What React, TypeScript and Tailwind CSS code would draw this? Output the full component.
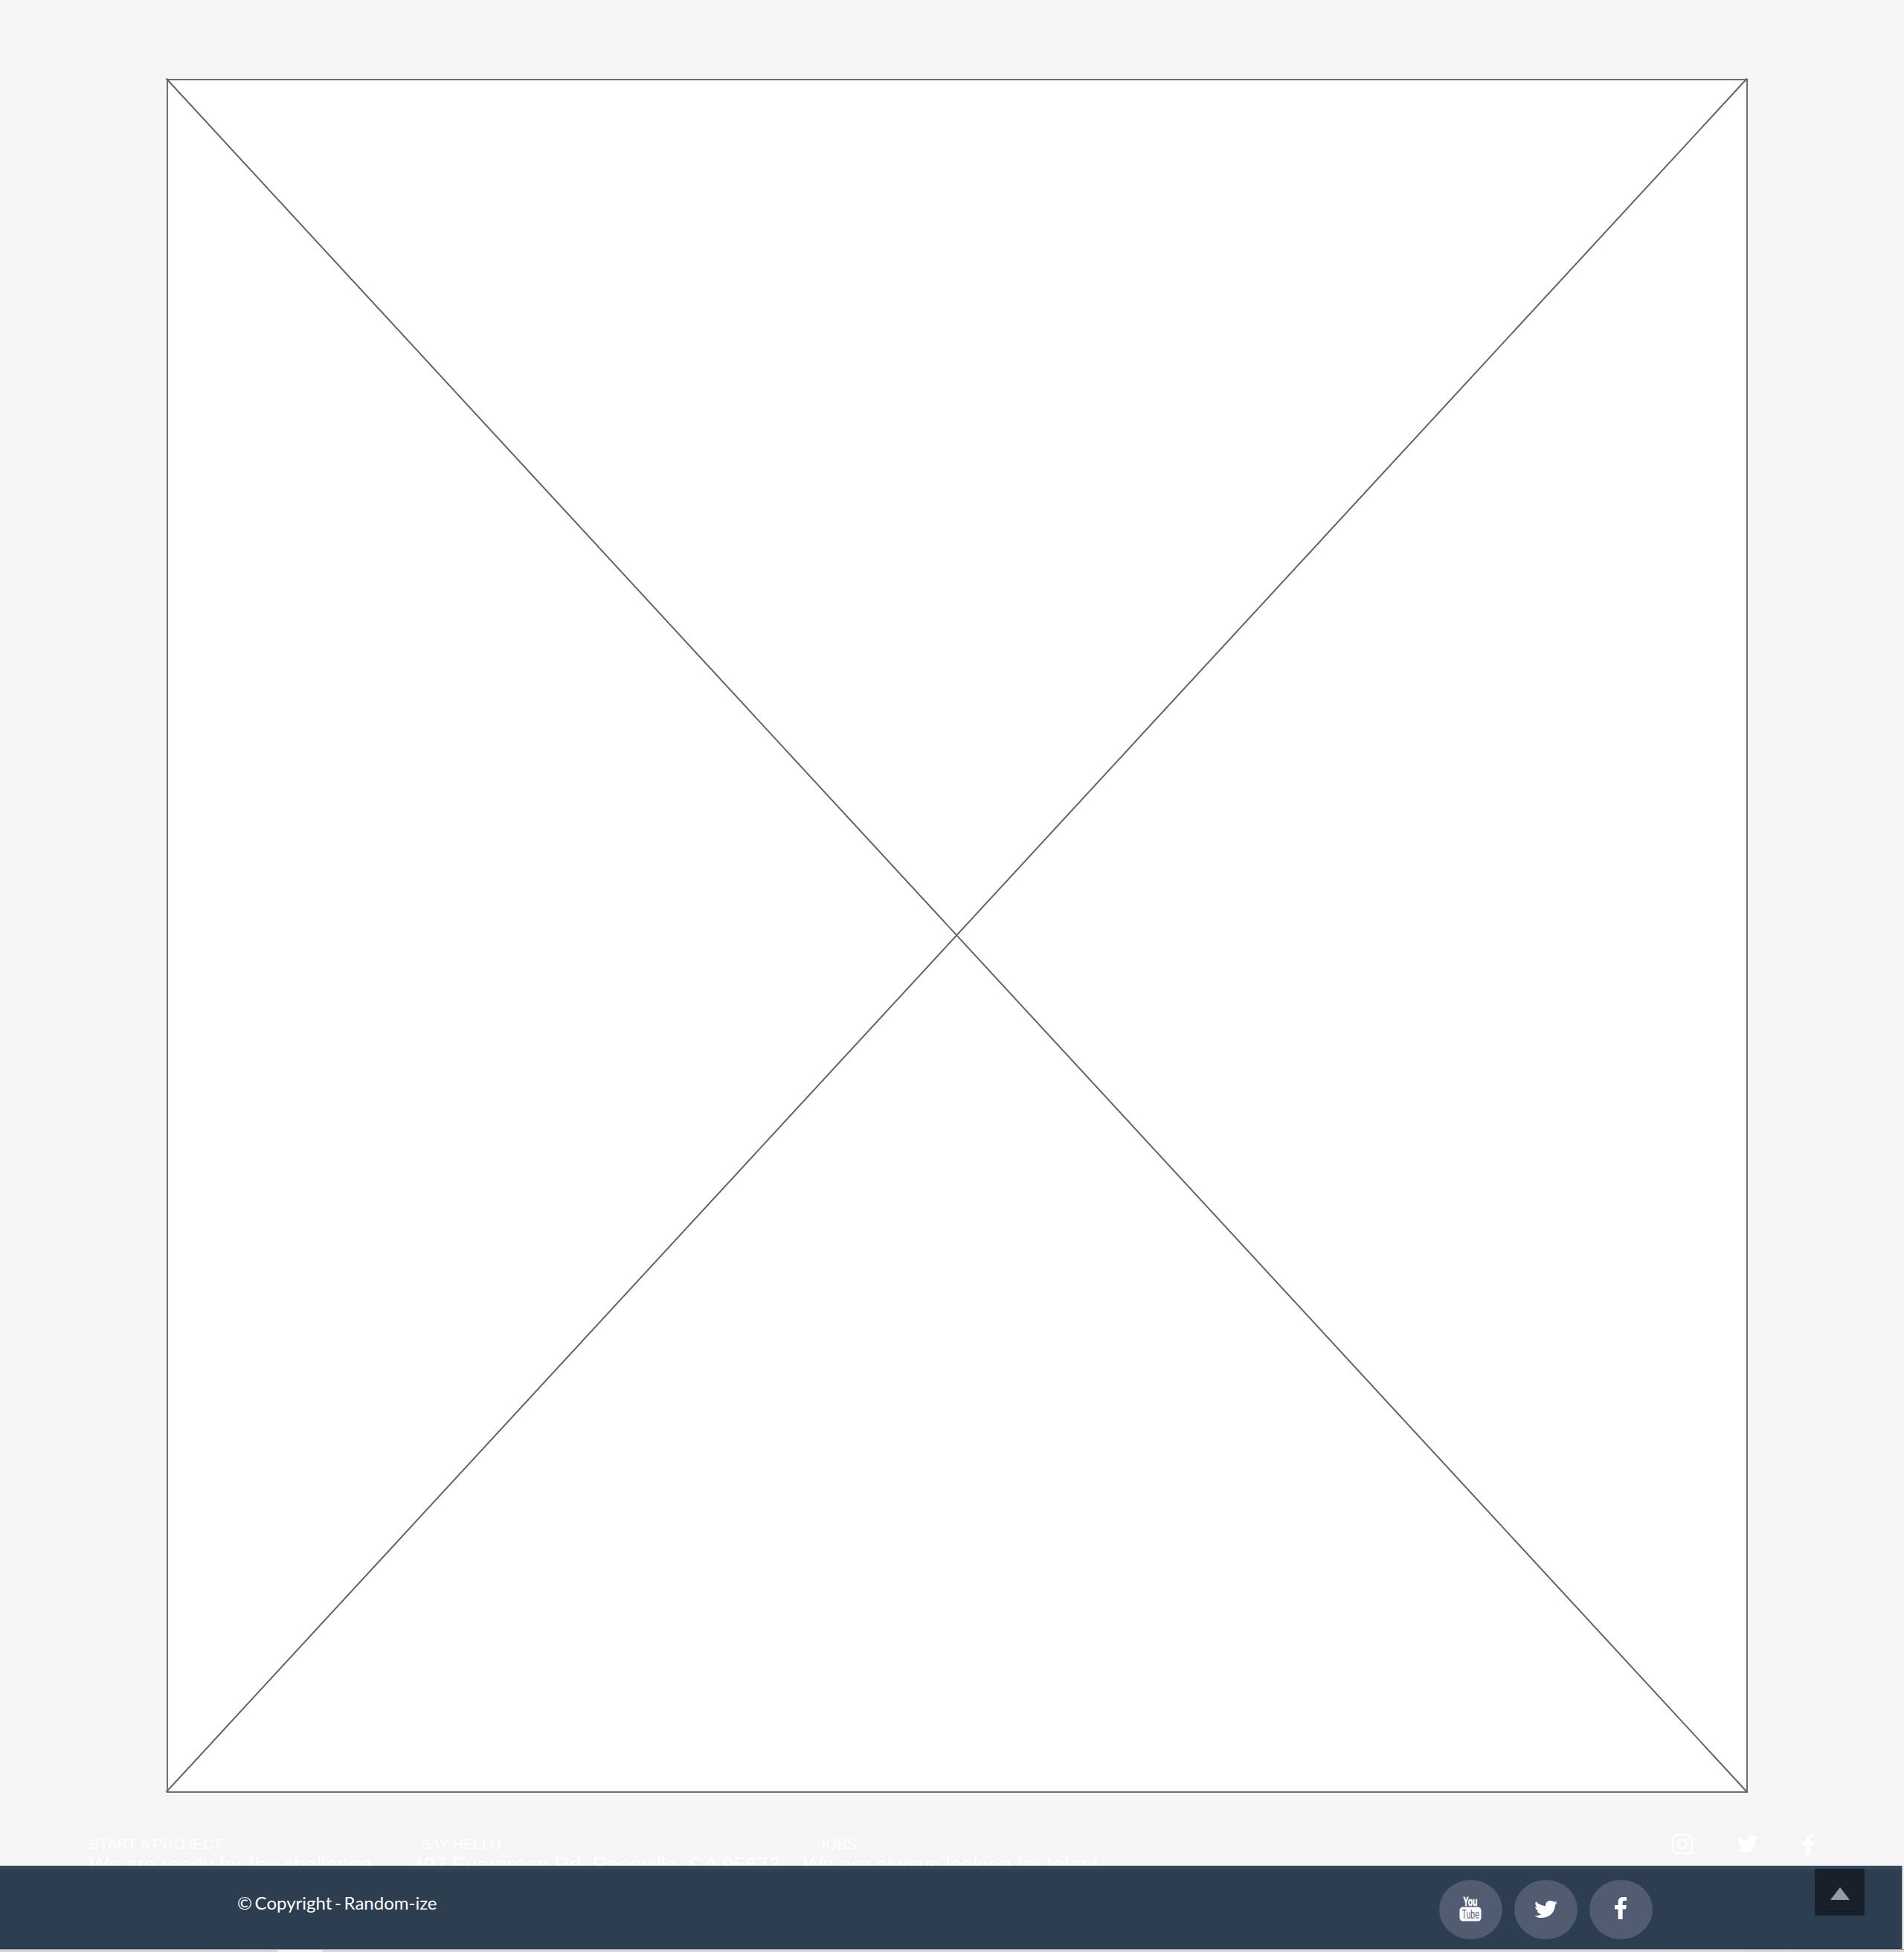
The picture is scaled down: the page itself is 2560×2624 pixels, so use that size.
import { FaTwitter, FaInstagram } from "react-icons/fa";

function Tweet() {
  return <FaTwitter className="h-full w-full" preserveAspectRatio="none" viewBox="0 48 512 416" />;
}

function Facebook() {
  return (
    <svg viewBox="0 0 15 28" preserveAspectRatio="none" className="h-full w-full" fill="currentColor">
      <path d="M15 .2V4.700h-2.600c-2 0-2.400 1-2.400 2.400v3.200h4.800l-.6 5H10V28H4.300V15.300H0v-5h4.300V6.600C4.300 2.400 6.900 0 10.800 0c1.800 0 3.500.1 4.200.2z" />
    </svg>
  );
}

function FooterColumn({ title, text, className, titleClass, textClass }: { title: string; text: string; className: string; titleClass: string; textClass: string }) {
  return (
    <div className={`flex shrink-0 flex-col whitespace-nowrap text-white ${className}`}>
      <span className={`text-[20px] leading-6 ${titleClass}`}>{title}</span>
      <span className={`text-[28px] leading-8 ${textClass}`}>{text}</span>
    </div>
  );
}

export default function App() {
  return (
    <div className="flex h-[2624px] w-[2560px] flex-col overflow-hidden bg-[#f6f4f5] font-['Liberation_Sans',sans-serif]">
      <main className="h-[2410px] shrink-0 pt-[106px] pl-[224px]">
        <div className="h-[2304px] w-[2126px] border-2 border-[#6e6e6e] bg-white">
          <svg className="-mt-[2px] -ml-[2px] h-[2304px] w-[2126px] overflow-visible" viewBox="0 0 2126 2304">
            <path d="M-.5-.5 2125 2303M2125-.5-.5 2303" stroke="#646464" strokeWidth="2" fill="none" />
          </svg>
        </div>
      </main>

      <section className="flex h-[98px] shrink-0 overflow-hidden pt-[57px] pl-[120px]">
        <FooterColumn title="START A PROJECT" text="We are ready for the challenge" className="w-[434px]" titleClass="" textClass="tracking-[-0.08px]" />
        <FooterColumn title="SAY HELLO" text="497 Evergreen Rd. Roseville, CA 95673" className="w-[526px]" titleClass="pl-[11px]" textClass="" />
        <FooterColumn title="JOBS" text="We are always looking for talent" className="w-[1168px]" titleClass="pl-[20px]" textClass="" />
        <div className="flex text-white">
          <FaInstagram className="-mt-[4px] -ml-[2px] h-[32px] w-[32px]" />
          <div className="ml-[58px] h-[23px] w-[28px]"><Tweet /></div>
          <div className="-mt-[2px] ml-[60px] h-[28px] w-[15px]"><Facebook /></div>
        </div>
      </section>

      <div className="flex shrink-0">
        <footer className="flex h-[112px] w-[2557px] shrink-0 border-t-[5px] border-[#34495e] bg-[#2c3e50] text-white">
          <div className="w-[1935px] shrink-0 pt-[29px] pl-[319px] font-['Lato',sans-serif] text-[24px] leading-8 [word-spacing:-2.500px]">© Copyright - Random-ize</div>
          <div className="flex shrink-0 gap-4 pt-[14px]">
            <div className="h-[80px] w-[85px] rounded-[50%] bg-[#515b72] pt-[22px] pl-[27px]">
              <svg viewBox="0 0 30 34" className="h-[34px] w-[30px]">
                <text x="5.500" y="13" textLength="19" lengthAdjust="spacingAndGlyphs" fill="#fff" stroke="#fff" strokeWidth=".6" fontFamily="Liberation Sans" fontWeight="700" fontSize="16">You</text>
                <rect x=".5" y="14.500" width="29" height="19" rx="4.500" fill="#fff" />
                <text x="3.500" y="30" textLength="23.500" lengthAdjust="spacingAndGlyphs" fill="#515b72" fontFamily="Liberation Sans" fontSize="17">Tube</text>
              </svg>
            </div>
            <div className="h-[80px] w-[85px] rounded-[50%] bg-[#515b72] pt-[28px] pl-[27px]">
              <div className="h-[23px] w-[31px]"><Tweet /></div>
            </div>
            <div className="h-[80px] w-[85px] rounded-[50%] bg-[#515b72] pt-[23px] pl-[34px]">
              <div className="h-[30px] w-[16px]"><Facebook /></div>
            </div>
          </div>
          <div className="-mt-[1px] ml-[218px] flex h-[63px] w-[67px] shrink-0 justify-center rounded-[3px] bg-[#18202a] pt-[25px]">
            <svg viewBox="0 0 26 17" className="h-[17px] w-[26px]"><path d="M13 0 26 17H0z" fill="#979da6" /></svg>
          </div>
        </footer>
        <div className="w-[3px] border-l border-[#a3abb3] bg-[#ededed]" />
      </div>
      <div className="flex h-1 shrink-0 border-t border-[#9a9fb0] bg-[#d7d6e0]">
        <div className="w-[373px] bg-linear-to-r from-[#d5d5d2] to-[#d5d3e0]" />
        <div className="w-[60px] bg-[#f0eff5]" />
        <div className="ml-[1787px] flex-1 bg-linear-to-r from-[#d7d6e0] to-[#d5d5d2]" />
      </div>
    </div>
  );
}
